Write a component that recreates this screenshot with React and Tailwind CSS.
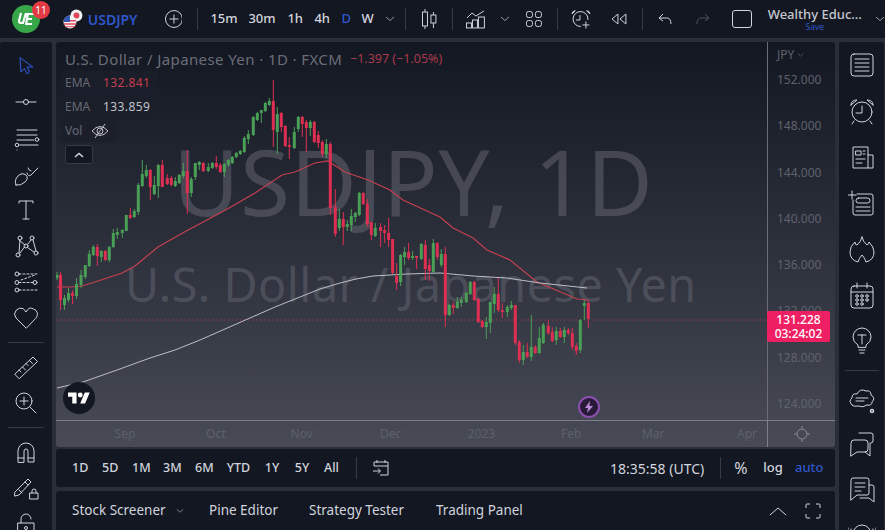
import React from "react";

const C = [
[57,275,278,272,280,'g'],[60.5,275,300,272,310,'r'],[64.5,298,305,295,310,'g'],[68.5,293,300,288,302,'g'],[72.5,293,296,290,304,'r'],[76.5,284,296,278,299,'g'],[81,275,285,270,288,'g'],[85.3,265,277,265,279,'g'],[89.3,254,266,250,267,'g'],[93.3,247,255,245,256,'g'],[97.3,247,256,244,266,'r'],[101.3,251,257,250,262,'g'],[105.3,251,260,250,261,'r'],[109.3,247,260,246,262,'g'],[113.3,233,247,229,248,'g'],[117.3,232,235,228,239,'g'],[122.3,230,233,229,238,'g'],[126.3,215,231,215,231,'g'],[130.3,215,218,208,219,'r'],[134.3,211,217,209,218,'g'],[138.3,185,212,183,215,'g'],[142.3,174,186,160,187,'g'],[146.3,170,176,165,178,'g'],[150.3,170,187,169,200,'r'],[154.3,185,194,176,195,'g'],[158.3,165,186,164,198,'g'],[162.3,165,187,160,187,'r'],[167.3,178,184,174,185,'r'],[171.3,178,185,176,186,'r'],[175.3,181,186,177,187,'g'],[179.3,175,183,174,184,'g'],[183.3,171,176,163,178,'g'],[187.3,171,193,150,214,'r'],[191.3,179,193,177,197,'g'],[195.3,163,177,163,180,'g'],[199.3,162,165,161,170,'g'],[203.3,163,171,162,172,'r'],[208.3,167,171,163,172,'g'],[212.3,163,168,162,169,'g'],[216.3,163,167,156,169,'r'],[220.3,165,172,163,173,'r'],[224.3,164,172,163,177,'g'],[228.3,160,165,159,167,'g'],[232.3,157,163,156,164,'g'],[236.3,153,157,152,158,'g'],[240.3,151,154,150,155,'g'],[244.3,138,152,136,153,'g'],[248.3,134,139,130,144,'g'],[253.3,117,135,116,136,'g'],[257.3,113,120,112,121,'g'],[261.3,110,113,110,123,'g'],[265.3,103,111,102,112,'g'],[269.3,101,105,98,106,'g'],
[273.3,101,130,80,147,'r'],[277.3,114,132,107,154,'g'],[281.3,113,127,112,132,'r'],[285.3,126,146,125,147,'r'],[289.3,145,147,137,159,'r'],[294.3,132,148,127,149,'g'],[298.3,117,129,116,132,'g'],[302.3,117,124,116,137,'r'],[306.3,122,128,120,152,'r'],[310.3,122,128,120,136,'g'],[314.3,122,142,121,143,'r'],[318.3,135,143,131,148,'r'],[322.3,142,154,140,157,'r'],[326.3,144,154,139,158,'g'],[330.3,144,208,142,215,'r'],[335.3,207,234,189,237,'r'],[339.3,219,228,209,231,'g'],[343.3,219,227,212,245,'r'],[347.3,224,227,220,231,'g'],[351.3,216,225,209,231,'g'],[355.3,213,217,212,222,'g'],[359.3,193,215,192,216,'g'],[363.3,193,204,192,205,'r'],[367.3,204,224,199,227,'r'],[371.3,222,235,222,240,'r'],[375.3,228,236,223,237,'g'],[380.6,227,231,223,247,'r'],[384.6,230,233,225,243,'r'],[388.6,233,240,218,247,'r'],[392.6,239,273,239,274,'r'],[396.6,276,283,263,290,'r'],[400.6,255,282,254,286,'g'],[404.6,252,257,247,265,'g'],[408.6,252,258,243,260,'r'],[412.6,256,258,251,260,'g'],[416.6,256,258,256,269,'r'],[421.3,244,259,243,260,'g'],[425.3,245,269,240,280,'r'],[429.3,265,271,259,281,'r'],[433.3,243,272,239,273,'g'],[437.3,243,257,242,260,'r'],[441.3,254,265,249,267,'g'],[445.3,254,315,247,327,'r'],[449.3,305,315,304,316,'g'],[453.3,305,308,302,314,'r'],[457.3,302,308,297,309,'g'],[461.3,300,303,297,307,'g'],[466.3,293,302,292,303,'g'],[470.3,282,294,281,295,'g'],[474.3,282,300,281,301,'r'],[478.3,299,322,298,323,'r'],[482.3,321,327,320,328,'r'],[486.3,322,327,317,339,'g'],[490.3,302,323,302,333,'g'],[494.3,294,304,287,313,'g'],[498.3,294,310,278,312,'r'],[502.3,310,312,303,318,'r'],[507.3,307,312,305,317,'g'],[511.3,305,308,301,310,'g'],[515.3,305,343,305,345,'r'],[519.3,342,360,340,363,'r'],[523.3,352,360,345,365,'g'],[527.3,352,357,343,358,'r'],[531.3,347,357,315,361,'g'],[535.3,347,353,345,354,'r'],[539.3,338,353,327,354,'g'],[543.3,325,343,323,344,'g'],[548.3,326,333,320,335,'r'],[552.3,332,341,327,342,'r'],[556.3,331,340,327,345,'g'],[560.3,331,337,328,338,'r'],[564.3,330,337,327,343,'g'],[568.3,330,333,328,335,'r'],[572.3,333,347,328,350,'r'],[576.3,346,351,343,355,'r'],[580.3,320,350,319,353,'g'],[584.3,303,306,300,320,'g'],[588.3,303,319,300,328,'r'],
];
const RED = "57,287 72,287 82,286 98,281 122,273 135,266 158,247 188,230 222,212 255,193 282,175 295,172 315,163 328,161 345,172 368,180 390,190 403,200 440,217 453,228 473,238 487,250 510,260 537,282 577,299 588,300";
const WHITE = "57,388 83,382 117,370 150,358 175,350 200,340 225,329 250,318 275,307 300,297 320,289 340,283 356,279 373,276 390,275 407,274 440,273 473,276 507,278 540,283 587,288";

const I = ({ s = 28, v = 28, children, className = "" }) => (
  <svg width={s} height={s} viewBox={`0 0 ${v} ${v}`} fill="none" stroke="currentColor" strokeWidth="1" strokeLinecap="round" strokeLinejoin="round" className={className}>{children}</svg>
);
const Chev = ({ className = "" }) => (
  <svg width="10" height="6" viewBox="0 0 10 6" fill="none" stroke="currentColor" className={className}><path d="M1 1l4 3.5L9 1" /></svg>
);
const Div = () => <div className="w-px h-[22px] bg-[#363a45]" />;

function Tool({ children }) {
  return <div className="h-[36px] flex items-center justify-center text-[#d1d4dc]">{children}</div>;
}
function RTool({ children, h = "h-[46px]" }) {
  return <div className={`${h} flex items-center justify-center text-[#d1d4dc]`}>{children}</div>;
}
const HSep = ({ w }) => <div className="h-[12px] flex items-center justify-center"><div className={`h-px ${w} bg-[#363a45]`} /></div>;

function Chart() {
  return (
    <svg width="711" height="378" viewBox="56 42 711 378" className="block">
      <line x1="56" y1="320" x2="767" y2="320" stroke="#e0315a" strokeOpacity="0.85" strokeDasharray="1 3" />
      <polyline points={RED} fill="none" stroke="#c4404f" strokeWidth="1.2" />
      <polyline points={WHITE} fill="none" stroke="#bdbfc6" strokeWidth="1" />
      {C.map(([x, t, b, h, l, k], i) => {
        const col = k === "r" ? "#de2f53" : "#4a9f56";
        return (
          <g key={i}>
            <line x1={x} x2={x} y1={h} y2={l} stroke={col} strokeWidth="1" />
            <rect x={x - 1.5} y={t} width="3" height={Math.max(b - t, 1)} fill={col} />
          </g>
        );
      })}
    </svg>
  );
}

const Ticks = ["152.000", "148.000", "144.000", "140.000", "136.000", "132.000", "128.000", "124.000"];

export default function App() {
  return (
    <div className="w-[885px] h-[530px] overflow-hidden flex flex-col gap-[4px] bg-[#2a2e39] text-[#d1d4dc] font-['Noto_Sans',sans-serif]">
      {/* top bar */}
      <div className="h-[38px] shrink-0 bg-[#131722] flex items-center">
        <div className="relative w-[28px] h-[28px] ml-[12px] rounded-full bg-[#37a749] flex items-center justify-center">
          <svg width="20" height="14" viewBox="0 0 20 14" fill="none" stroke="#fff" strokeWidth="2.2"><path d="M5 1L3 9q0 2 2 2h2l3-10M12 1l-2 12M12 2h6M11 7h5M10 12h6" /></svg>
          <div className="absolute left-[20px] top-[-4px] w-[18px] h-[18px] rounded-full bg-[#e23b43] text-white text-[10px] leading-[18px] text-center">11</div>
        </div>
        <svg width="20" height="20" viewBox="0 0 20 20" className="ml-[23px]">
          <circle cx="13.5" cy="6.5" r="6" fill="#f2f2f2" /><circle cx="13.5" cy="6.5" r="3" fill="#e0455a" />
          <circle cx="7" cy="13" r="6.5" fill="#f4f4f4" />
          <path d="M1 11h12v1.6H1zM.6 14.2h12.8v1.6H.6zM2 17.2h10v1.2H2z" fill="#e0455a" />
          <path d="M1 10.6A6.5 6.5 0 0 1 7 6.5V13H.6z" fill="#3458b0" />
        </svg>
        <div className="ml-[5px] w-[50px] text-[14px] font-semibold text-[#2f56cb] whitespace-nowrap">USDJPY</div>
        <svg width="18" height="18" viewBox="0 0 18 18" fill="none" stroke="#d1d4dc" className="ml-[27px]"><circle cx="9" cy="9" r="8.5" /><path d="M9 4.5v9M4.5 9h9" /></svg>
        <div className="ml-[15px]"><Div /></div>
        <div className="ml-[12px] w-[26px] text-center text-[13px] font-medium">15m</div>
        <div className="ml-[12px] w-[26px] text-center text-[13px] font-medium">30m</div>
        <div className="ml-[13px] w-[14px] text-center text-[13px] font-medium">1h</div>
        <div className="ml-[13px] w-[14px] text-center text-[13px] font-medium">4h</div>
        <div className="ml-[13px] w-[8px] text-center text-[13px] font-medium text-[#2f56cb]">D</div>
        <div className="ml-[12px] w-[12px] text-center text-[13px] font-medium">W</div>
        <Chev className="ml-[12px] text-[#9598a1]" />
        <div className="ml-[10px]"><Div /></div>
        <svg width="18" height="22" viewBox="0 0 18 22" fill="none" stroke="#d1d4dc" className="ml-[14px]"><path d="M5 1v20M13.5 4v16" /><rect x="2.5" y="4" width="5" height="14" fill="#131722" /><rect x="11" y="7" width="5" height="8" fill="#131722" /></svg>
        <div className="ml-[14px]"><Div /></div>
        <svg width="20" height="20" viewBox="0 0 20 20" fill="none" stroke="#d1d4dc" className="ml-[13px]"><path d="M1 9l5-5 4 3 8-5" /><rect x=".5" y="14" width="5" height="5" /><rect x="6.5" y="11" width="5" height="8" /><rect x="12.5" y="8" width="6" height="11" /></svg>
        <Chev className="ml-[14px] text-[#9598a1]" />
        <svg width="16" height="16" viewBox="0 0 16 16" fill="none" stroke="#d1d4dc" className="ml-[16px]"><rect x=".5" y=".5" width="6" height="6" rx="2" /><rect x="9.5" y=".5" width="6" height="6" rx="2" /><rect x=".5" y="9.5" width="6" height="6" rx="2" /><rect x="9.5" y="9.5" width="6" height="6" rx="2" /></svg>
        <div className="ml-[15px]"><Div /></div>
        <svg width="20" height="20" viewBox="0 0 20 20" fill="none" stroke="#d1d4dc" className="ml-[13px]"><path d="M17 11A7.5 7.5 0 1 0 10 17.5M9 6v5H5" /><path d="M1 5q0-3 3.5-3.5M19 5q0-3-3.5-3.5M1 5l3-3M19 5l-3-3M15 12.5v7M11.5 16h7" /></svg>
        <svg width="16" height="12" viewBox="0 0 16 12" fill="none" stroke="#d1d4dc" className="ml-[20px]"><path d="M7 1L1 6l6 5zM15 1L9 6l6 5z" /></svg>
        <div className="ml-[15px]"><Div /></div>
        <svg width="14" height="12" viewBox="0 0 14 12" fill="none" stroke="#d1d4dc" className="ml-[15px]"><path d="M5 1L1 5l4 3M1 5h8q4 0 4 6" /></svg>
        <svg width="14" height="12" viewBox="0 0 14 12" fill="none" stroke="#4f525c" className="ml-[24px]"><path d="M9 1l4 4-4 3M13 5H5q-4 0-4 6" /></svg>
        <div className="ml-[22px] w-[20px] h-[18px] border border-[#d1d4dc] rounded-[3px]" />
        <div className="ml-[16px] w-[95px] flex flex-col items-center leading-none">
          <div className="text-[13px] font-medium leading-[15px] whitespace-nowrap text-[#c3c6ce]">Wealthy Educ...</div>
          <div className="text-[8.5px] leading-[10px] text-[#2f56cb]">Save</div>
        </div>
        <Chev className="ml-[13px] shrink-0 text-[#9598a1]" />
      </div>

      {/* body */}
      <div className="flex-1 min-h-0 flex gap-[4px]">
        {/* left tools */}
        <div className="w-[52px] shrink-0 bg-[#131722] rounded-t-[3px] pt-[6px] overflow-hidden">
          <Tool>
            <I><path d="M8 6l1 14 3.5-3.5L15 22l2.5-2-2.5-5h5.5z" stroke="#2f5fe0" /></I>
          </Tool>
          <Tool><I><path d="M4 14h7.5M16.500 14H24" /><circle cx="14" cy="14" r="2.500" /></I></Tool>
          <Tool><I><path d="M5 6h20M5 11h20M5 16h17M5 26h0" /><path d="M8 21h18" /><circle cx="25" cy="15.500" r="1.800" /><circle cx="5" cy="21" r="1.800" /></I></Tool>
          <Tool><I><path d="M4 25q-2-5 2-9t8-1q3 3-1 7-4 4-9 3zM15 13q1 4 4 2l7-7M16 8q1 3 3 3" /></I></Tool>
          <Tool><I><path d="M7 7V5h14v2M14 5v18M11 23h6" /></I></Tool>
          <Tool><I><circle cx="6" cy="23" r="2" /><circle cx="8" cy="6" r="2" /><circle cx="20" cy="6" r="2" /><circle cx="24" cy="21" r="2" /><circle cx="14" cy="14" r="2" /><path d="M7 21l1-13M7 8l6 5M15.500 12.500L19 8M21 8l3 11M8 21l4.500-6M15.500 15.500L22 20" /></I></Tool>
          <Tool><I><circle cx="5" cy="6" r="2" /><circle cx="5" cy="14.500" r="2" /><circle cx="5" cy="22" r="2" /><circle cx="23" cy="14.500" r="2" /><path d="M7 6h18M7 22h18M7 14.500h14M9 12l14-5" strokeDasharray="2 2" /></I></Tool>
          <Tool><I><path d="M14 24L4 14q-3-4 0-7.500t7-2Q13 6 14 8q1-2 3-3.500t7 2q3 3.500 0 7.500z" /></I></Tool>
          <HSep w="w-[36px]" />
          <div className="h-px" />
          <Tool><I><path d="M3 21L21 4l4.500 4.500L7.500 25.500zM7 17l2 2M10.500 14l3 3M14 10.500l2 2M17.500 7.500l3 3" /></I></Tool>
          <Tool><I><circle cx="12" cy="12" r="8" /><path d="M12 8v8M8 12h8M18 18l6 6" /></I></Tool>
          <HSep w="w-[36px]" />
          <div className="h-px" />
          <Tool><I><path d="M6 24V13a8 8 0 0 1 16 0v11h-6V13a2 2 0 0 0-4 0v11zM6 20h6M16 20h6" /></I></Tool>
          <Tool><I><path d="M3 18L16 5l3 3L7 21l-4 1zM13 8l3 3M7 16l3 3" /><rect x="18" y="19" width="8" height="6" /><path d="M20 19v-2a2 2 0 0 1 4 0v2" /></I></Tool>
          <Tool><I><rect x="6" y="13" width="16" height="12" /><path d="M9 13V9a5 5 0 0 1 10 0" /><circle cx="14" cy="18" r="1.500" /></I></Tool>
        </div>

        {/* main column */}
        <div className="w-[779px] shrink-0 flex flex-col">
          <div className="relative h-[405px] shrink-0 rounded-[3px] overflow-hidden bg-gradient-to-b from-[#131722] to-[#484b56] flex flex-col">
            <div className="flex h-[378px]">
              <div className="relative w-[711px] shrink-0">
                <div className="absolute left-[117px] top-[94px] text-[91px] leading-none whitespace-nowrap text-[#62656f]/55 font-normal tracking-[0.5px]">USDJPY, 1D</div>
                <div className="absolute left-[69px] top-[219px] text-[46.7px] leading-none whitespace-nowrap text-[#62656f]/55 tracking-[0.5px]">U.S. Dollar / Japanese Yen</div>
                <div className="absolute inset-0"><Chart /></div>
              </div>
              <div className="w-[68px] border-l border-[#6b6e78] pt-[6px] pl-[9px] text-[12px] text-[#5f626d]">
                <div className="flex items-center gap-[3px] h-[14px]">JPY<Chev className="w-[7px]" /></div>
                <div className="mt-[9px]">
                  {Ticks.map((t) => <div key={t} className="h-[46.25px] leading-[16px] pt-[1px]">{t}</div>)}
                </div>
              </div>
            </div>
            <div className="flex h-[27px] border-t border-[#7d808a] text-[12px] text-[#5d606b]">
              <div className="w-[711px] flex items-center">
                <div className="w-[40px] text-center ml-[49px]">Sep</div>
                <div className="w-[40px] text-center ml-[51px]">Oct</div>
                <div className="w-[40px] text-center ml-[46px]">Nov</div>
                <div className="w-[40px] text-center ml-[49px]">Dec</div>
                <div className="w-[40px] text-center ml-[51px]">2023</div>
                <div className="w-[40px] text-center ml-[50px]">Feb</div>
                <div className="w-[40px] text-center ml-[42px]">Mar</div>
                <div className="w-[40px] text-center ml-[54px]">Apr</div>
              </div>
              <div className="w-[68px] border-l border-[#7d808a] flex items-center justify-center text-[#8a8d97]">
                <svg width="16" height="16" viewBox="0 0 16 16" fill="none" stroke="currentColor"><circle cx="8" cy="8" r="5" /><path d="M8 0v2.500M8 13.500V16M0 8h2.500M13.500 8H16" /></svg>
              </div>
            </div>

            {/* legend overlays */}
            <div className="absolute left-[9px] top-[9px] flex items-center h-[16px] whitespace-nowrap text-[15px] tracking-[0.4px] text-[#6b6e79]">
              <span className="w-[272px]">U.S. Dollar / Japanese Yen · 1D · FXCM</span>
              <span className="ml-[13px] text-[12.5px] tracking-normal text-[#a8394a]">−1.397 (−1.05%)</span>
            </div>
            <div className="absolute left-[5px] top-[29px] flex flex-col text-[12px]">
              <div className="flex items-center h-[24px] w-[96px] pl-[4px] bg-[#1b1f2a]/80 text-[#666974]"><span className="w-[38px]">EMA</span><span className="text-[#c43d4f] tracking-[0.4px]">132.841</span></div>
              <div className="flex items-center h-[24px] w-[96px] pl-[4px] bg-[#1b1f2a]/80 text-[#666974]"><span className="w-[38px]">EMA</span><span className="text-[#c0c3cb] tracking-[0.4px]">133.859</span></div>
              <div className="flex items-center h-[23px] w-[55px] pl-[4px] bg-[#1b1f2a]/80 text-[#666974]">
                <span className="w-[26px]">Vol</span>
                <svg width="18" height="16" viewBox="0 0 18 16" fill="none" stroke="#c0c3cb"><path d="M1 8q8-9 16 0-8 9-16 0z" /><circle cx="9" cy="8" r="3" /><path d="M14 1L4 15" /></svg>
              </div>
            </div>
            <div className="absolute left-[9px] top-[103px] w-[28px] h-[19px] border border-[#363a45] rounded-[3px] bg-[#131722] flex items-center justify-center">
              <svg width="10" height="6" viewBox="0 0 10 6" fill="none" stroke="#d1d4dc" strokeWidth="1.6"><path d="M1 5l4-3.500L9 5" /></svg>
            </div>
            <div className="absolute left-[7px] top-[340px] w-[32px] h-[32px] rounded-full bg-[#131722] flex items-center justify-center">
              <svg width="22" height="16" viewBox="0 4 36 18" fill="#fff"><path d="M14 22H7V11H0V4h14v18zM28 22h-8l7.500-18h8L28 22z" /><circle cx="20" cy="8" r="4" /></svg>
            </div>
            <div className="absolute left-[522px] top-[354px] w-[22px] h-[22px] rounded-full bg-[#2a1a3a] border-2 border-[#8d4fb0] flex items-center justify-center">
              <svg width="10" height="12" viewBox="0 0 10 12" fill="#b98ad8"><path d="M6 0L1 7h3l-1 5 6-7H5.500z" /></svg>
            </div>
            <div className="absolute left-[711px] top-[269px] w-[63px] h-[31px] rounded-[2px] bg-[#ee1f63] text-white text-[12px] font-medium leading-[14px] flex flex-col items-center justify-center">
              <span>131.228</span><span>03:24:02</span>
            </div>
          </div>

          {/* range bar */}
          <div className="h-[38px] mt-[2px] shrink-0 bg-[#131722] rounded-[3px] flex items-center text-[12.5px] font-medium">
            <div className="ml-[16px] w-[16px] text-center">1D</div>
            <div className="ml-[14px] w-[16px] text-center">5D</div>
            <div className="ml-[14px] w-[18px] text-center">1M</div>
            <div className="ml-[13px] w-[18px] text-center">3M</div>
            <div className="ml-[14px] w-[18px] text-center">6M</div>
            <div className="ml-[13px] w-[25px] text-center">YTD</div>
            <div className="ml-[13px] w-[16px] text-center">1Y</div>
            <div className="ml-[14px] w-[16px] text-center">5Y</div>
            <div className="ml-[13px] w-[17px] text-center">All</div>
            <div className="ml-[16px]"><Div /></div>
            <svg width="18" height="18" viewBox="0 0 18 18" fill="none" stroke="#d1d4dc" className="ml-[15px]"><path d="M2 7V3h14v13H8M2 7h14M5 1v3M13 1v3M1 12h7M6 9.500L8.500 12 6 14.500" /></svg>
            <div className="ml-[220px] w-[94px] text-center text-[14px] font-normal whitespace-nowrap">18:35:58 (UTC)</div>
            <div className="ml-[16px]"><Div /></div>
            <div className="ml-[13px] w-[14px] text-center text-[16px] font-normal">%</div>
            <div className="ml-[15px] w-[20px] text-center text-[13px]">log</div>
            <div className="ml-[12px] w-[28px] text-center text-[13px] text-[#2f56cb]">auto</div>
          </div>

          {/* bottom panel */}
          <div className="h-[39px] mt-[4px] shrink-0 bg-[#131722] rounded-t-[3px] flex items-center text-[13.5px]">
            <div className="ml-[16px] w-[93px] whitespace-nowrap">Stock Screener</div>
            <Chev className="ml-[11px] w-[8px] text-[#9598a1]" />
            <div className="ml-[25px] w-[69px] text-center whitespace-nowrap">Pine Editor</div>
            <div className="ml-[31px] w-[95px] text-center whitespace-nowrap">Strategy Tester</div>
            <div className="ml-[32px] w-[84px] text-center whitespace-nowrap">Trading Panel</div>
            <svg width="18" height="10" viewBox="0 0 18 10" fill="none" stroke="#d1d4dc" className="ml-[249px]"><path d="M1 9l8-7 8 7" /></svg>
            <svg width="16" height="16" viewBox="0 0 16 16" fill="none" stroke="#d1d4dc" className="ml-[18px]"><path d="M1 5V2q0-1 1-1h3M11 1h3q1 0 1 1v3M15 11v3q0 1-1 1h-3M5 15H2q-1 0-1-1v-3" /></svg>
          </div>
        </div>

        {/* right tools */}
        <div className="w-[45px] shrink-0 bg-[#131722] rounded-t-[3px] overflow-hidden">
          <RTool><I><rect x="3" y="3" width="22" height="22" rx="3" /><path d="M7 8h14M7 12h14M7 16h14M7 20h14" /></I></RTool>
          <RTool><I><circle cx="14" cy="15" r="10" /><path d="M14 9v7H8M3 8q0-5 6-5L3 8zM25 8q0-5-6-5l6 5zM6 24l-2 3M22 24l2 3" /></I></RTool>
          <RTool><I><path d="M20 25H5V4h15v21h5V12h-5" /><rect x="8" y="8" width="5" height="4" /><path d="M15 8h2M15 11h2M8 16h9M8 20h6" /></I></RTool>
          <RTool><I><path d="M9 5h14q2 0 2 2v17q0 2-2 2H7q-2 0-2-2v-13" /><rect x="8" y="9" width="14" height="5" rx="2.500" /><path d="M8 18h14M8 22h14M0 6h8M4 2v8" /></I></RTool>
          <RTool><I><path d="M14 2q1 5 5 8 2-1 2-3 5 5 5 10 0 8-8 10-1-4-4-7-3 3-4 7-8-2-8-10 0-6 5-10 0 3 2 3 4-3 5-8z" /></I></RTool>
          <RTool><I><rect x="3" y="5" width="22" height="22" rx="3" /><path d="M3 11h22M9 2v5M19 2v5" /><circle cx="9" cy="15" r="1.300" /><circle cx="14" cy="15" r="1.300" /><circle cx="19" cy="15" r="1.300" /><circle cx="9" cy="19" r="1.300" /><circle cx="14" cy="19" r="1.300" /><circle cx="19" cy="19" r="1.300" /><circle cx="9" cy="23" r="1.300" /><circle cx="14" cy="23" r="1.300" /></I></RTool>
          <RTool><I><path d="M10 20v-2q-5-3-5-8a9 9 0 0 1 18 0q0 5-5 8v2zM10 8h8M14 8v9M11 23h6M12 26h4" /></I></RTool>
          <HSep w="w-[34px]" />
          <RTool h="h-[45px]"><I><path d="M4 20q-4-4 0-7 0-5 5-4 3-6 9-3 5-1 5 4 5 3 1 7 0 4-5 3-4 3-9 1-5 1-6-1z" /><path d="M8 13h12M8 16h8" /><circle cx="24" cy="26" r="1.500" strokeWidth="1.500" /></I></RTool>
          <RTool h="h-[45px]"><I><path d="M11 3h12q2 0 2 2v6q0 2-2 2M3 13q0-3 3-3h11q3 0 3 3v6q0 3-3 3H9l-6 4z" /><path d="M22 13v13l-5-4" /></I></RTool>
          <RTool h="h-[45px]"><I><path d="M3 5q0-2 2-2h14q2 0 2 2v13q0 2-2 2H9l-6 5zM21 10h3q2 0 2 2v15l-5-4H12M7 8h10M7 12h10M7 16h6" /></I></RTool>
          <RTool h="h-[45px]"><I><circle cx="14" cy="14" r="9" /><path d="M3 9q-2 5 0 10M25 9q2 5 0 10M0 8q-1 6 0 12M28 8q1 6 0 12" /></I></RTool>
        </div>
      </div>
    </div>
  );
}
